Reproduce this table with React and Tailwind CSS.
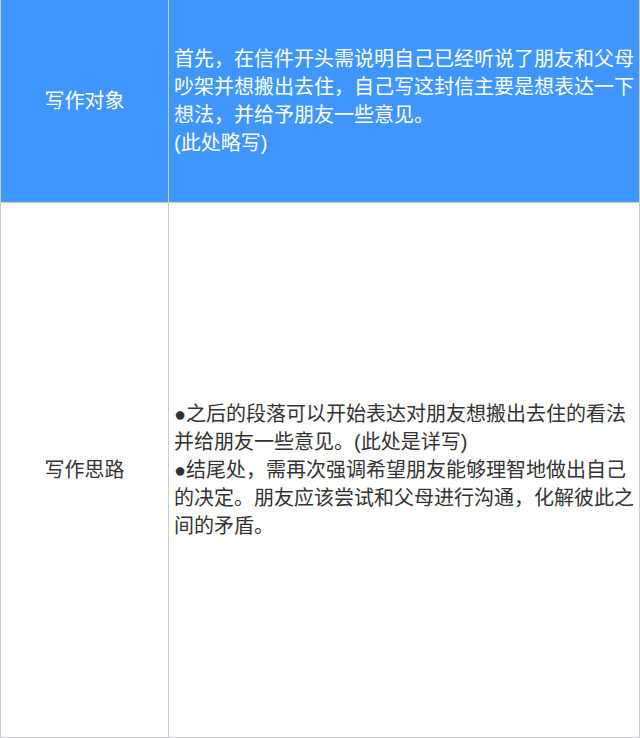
import React from "react";

export default function App() {
  return (
    <div
      className="w-[640px] h-[738px] flex flex-col border-l border-r border-b border-[#c9cdd1] bg-white text-[20px] leading-[28px]"
      style={{ fontFamily: '"Liberation Sans", "Noto Sans CJK SC", sans-serif' }}
    >
      {/* Row 1 */}
      <div className="flex h-[203px] shrink-0 bg-[#4096ff] text-white border-b border-[#c9cdd1]">
        <div className="w-[168px] shrink-0 border-r border-[#c9cdd1] flex items-center justify-center">
          写作对象
        </div>
        <div className="flex-1 flex items-center pl-[5px] pr-[4px]">
          <p>
            首先，在信件开头需说明自己已经听说了朋友和父母吵架并想搬出去住，自己写这封信主要是想表达一下想法，并给予朋友一些意见。
            <br />
            (此处略写)
          </p>
        </div>
      </div>

      {/* Row 2 */}
      <div className="flex flex-1 text-[#333333]">
        <div className="w-[168px] shrink-0 border-r border-[#c9cdd1] flex items-center justify-center">
          写作思路
        </div>
        <div className="flex-1 flex items-center pl-[5px] pr-[4px]">
          <p>
            ●之后的段落可以开始表达对朋友想搬出去住的看法并给朋友一些意见。(此处是详写)
            <br />
            ●结尾处，需再次强调希望朋友能够理智地做出自己的决定。朋友应该尝试和父母进行沟通，化解彼此之间的矛盾。
          </p>
        </div>
      </div>
    </div>
  );
}
